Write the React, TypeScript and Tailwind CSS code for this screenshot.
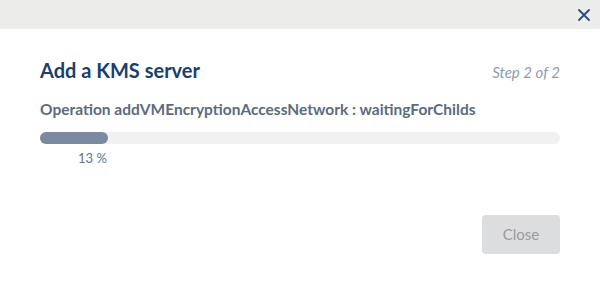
import React from 'react';

const progress = 13;

export default function App() {
  return (
    <div className="w-[600px] h-[284px] bg-white flex flex-col font-['Lato',sans-serif]">
      <div className="h-[29px] bg-[#ecedeb] flex items-center justify-end pr-[9px]">
        <button className="w-[14px] h-[14px] flex items-center justify-center">
          <svg width="12" height="12" viewBox="0 0 12 12">
            <path d="M1 1 L11 11 M11 1 L1 11" stroke="#2d4c78" strokeWidth="1.8" strokeLinecap="round" />
          </svg>
        </button>
      </div>

      <div className="flex-1 flex flex-col px-10 pt-[29px]">
        <div className="flex items-baseline justify-between">
          <h2 className="text-[20px] font-bold text-[#1b3f6d] leading-6">Add a KMS server</h2>
          <span className="text-[15px] italic text-[#8c9bad]">Step 2 of 2</span>
        </div>

        <p className="mt-[15px] text-[15.5px] font-bold text-[#5b6b80] leading-5">
          Operation addVMEncryptionAccessNetwork : waitingForChilds
        </p>

        <div className="mt-[13px] h-[12px] w-full rounded-full bg-[#f1f1f1]">
          <div className="h-full rounded-full bg-[#7b8aa0]" style={{ width: `${progress}%` }} />
        </div>
        <div className="mt-[5px] pl-[38px] text-[13px] text-[#5f7590]">{progress} %</div>

        <div className="mt-auto mb-[30px] flex justify-end">
          <button className="w-[78px] h-[39px] rounded-[4px] bg-[#dcdddf] text-[15px] text-[#9a9a9a]">
            Close
          </button>
        </div>
      </div>
    </div>
  );
}
